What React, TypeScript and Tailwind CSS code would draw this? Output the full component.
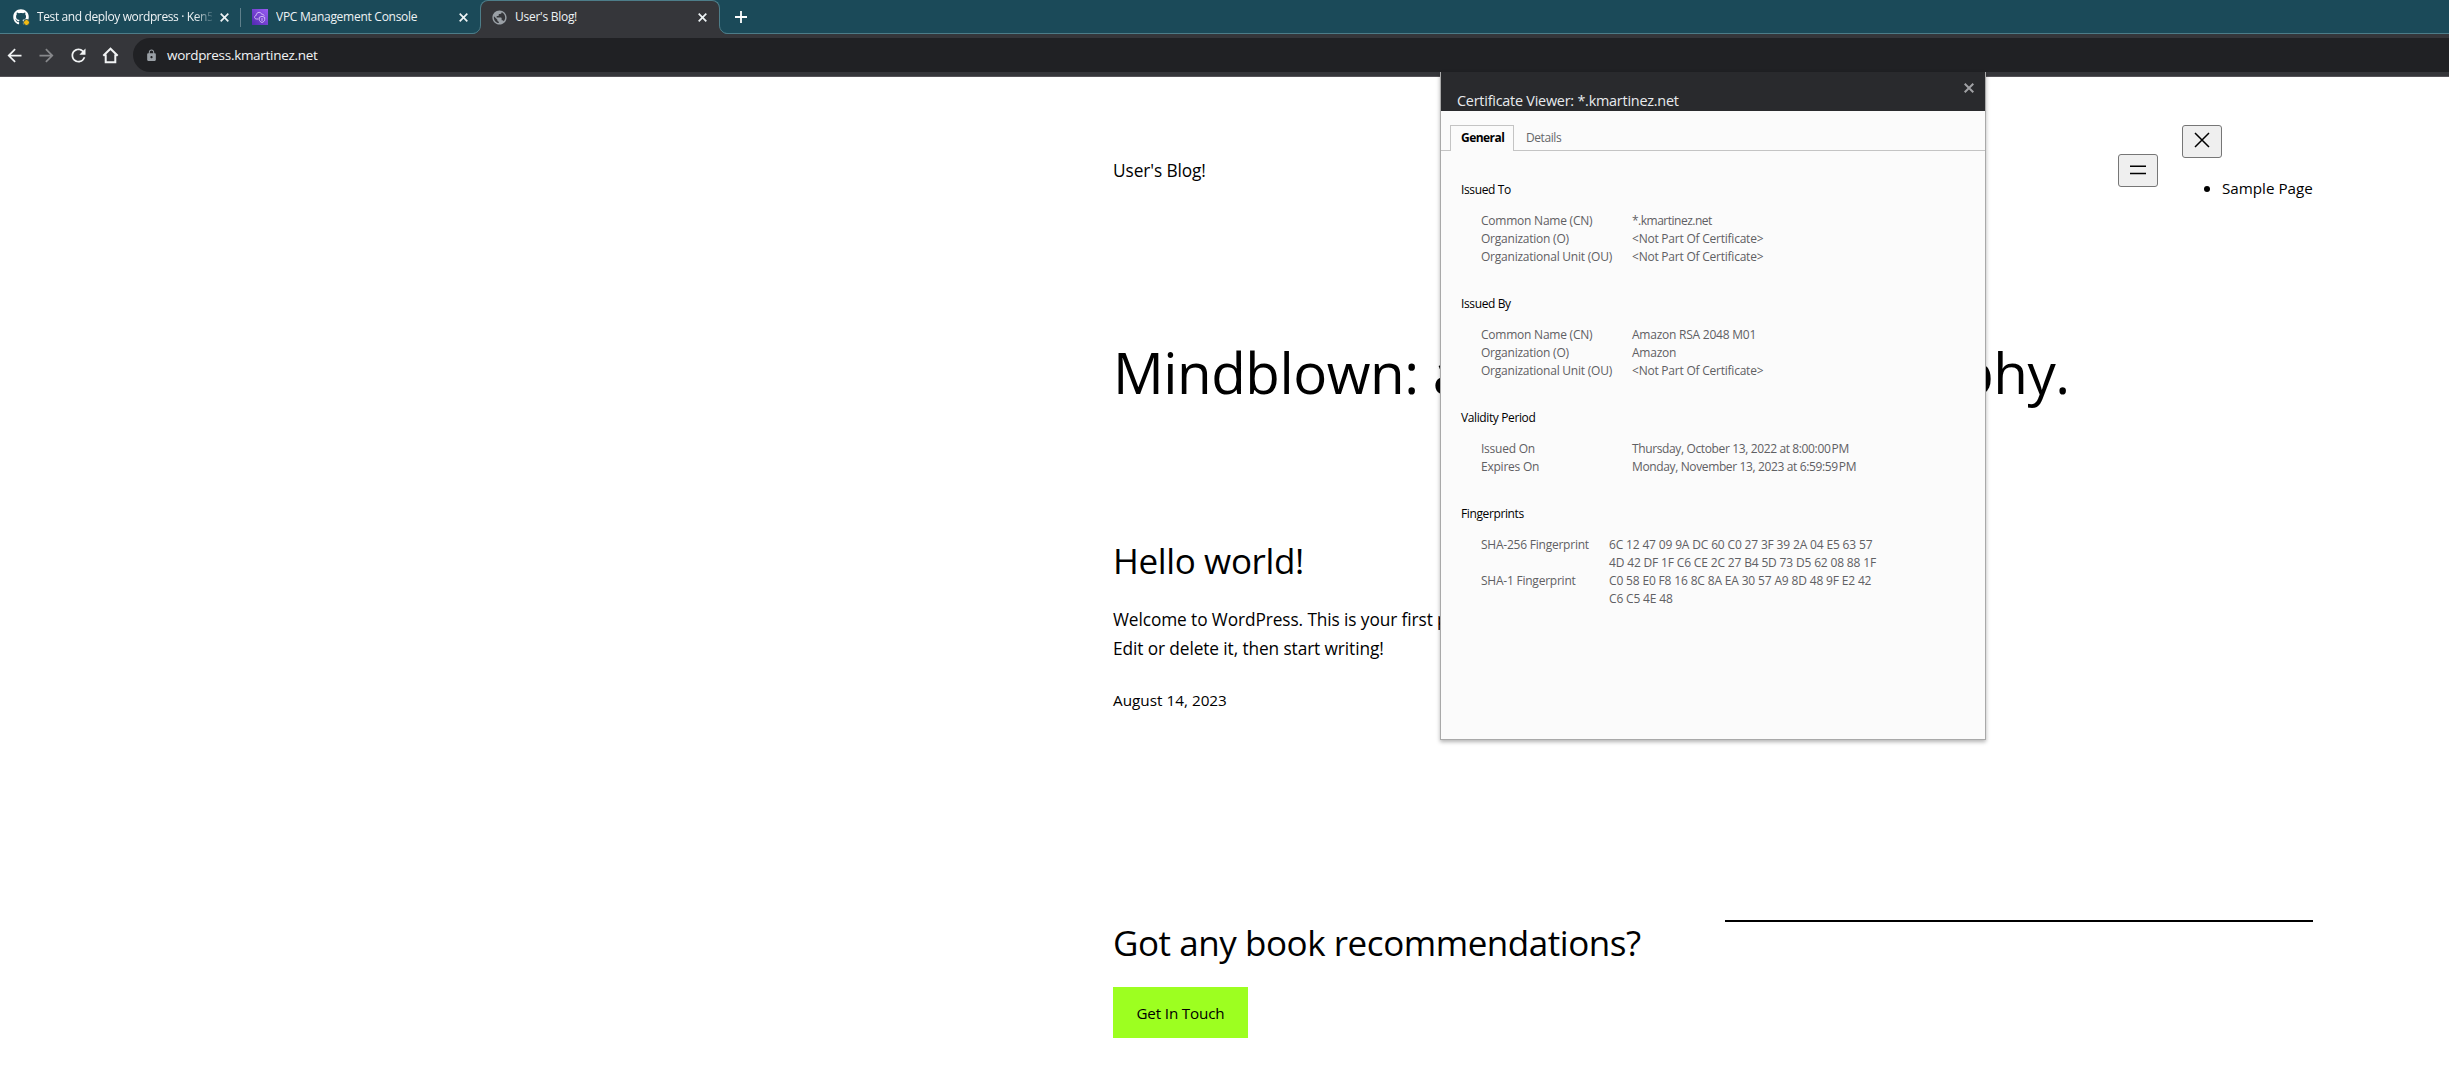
import type { ReactNode } from "react";
import { FaGithub } from "react-icons/fa";
import { MdArrowBack, MdArrowForward, MdLock, MdPublic, MdRefresh } from "react-icons/md";

function Cross({ size, stroke = 1.7 }: { size: number; stroke?: number }) {
  return (
    <svg width={size} height={size} viewBox={`0 0 ${size} ${size}`} className="shrink-0" fill="none" stroke="currentColor" strokeWidth={stroke}>
      <path d={`M.7 .7L${size - 0.7} ${size - 0.7}M${size - 0.7} .7L.7 ${size - 0.7}`} />
    </svg>
  );
}

function VpcIcon() {
  return (
    <svg width="16" height="16" viewBox="0 0 16 16" className="shrink-0">
      <defs>
        <linearGradient id="vpc" x1="0" y1="1" x2="1" y2="0">
          <stop offset="0" stopColor="#5128b0" />
          <stop offset="1" stopColor="#9a5cf5" />
        </linearGradient>
      </defs>
      <rect width="16" height="16" fill="url(#vpc)" />
      <g fill="none" stroke="#e3d6fb" strokeWidth=".8">
        <path d="M6.5 10H4.6C3.3 10 2.6 9.2 2.6 8.200C2.600 7.200 3.300 6.500 4.200 6.400C4.200 4.500 5.500 3.400 7.100 3.400C8.500 3.400 9.400 4.200 9.800 5.400C11 5 12 5.700 12.100 6.800" />
        <path d="M10 7.300L12.700 8.300V10.500C12.700 12 11.500 12.900 10 13.500C8.500 12.900 7.300 12 7.300 10.500V8.300ZM10 9V12" />
      </g>
    </svg>
  );
}

function Tab({ icon, children, fade }: { icon: ReactNode; children: ReactNode; fade?: boolean }) {
  return (
    <div className="flex h-[34px] w-[239px] items-center pl-[12px] pr-[11px]">
      {icon}
      <div
        className={`ml-[8px] flex-1 overflow-hidden whitespace-nowrap text-[12px] leading-[18px] ${
          fade ? "-tracking-[0.38px] [mask-image:linear-gradient(to_right,black_158px,transparent_178px)]" : "-tracking-[0.27px]"
        }`}
      >
        {children}
      </div>
      <span className="ml-[8px] flex w-[9px]"><Cross size={9} /></span>
    </div>
  );
}

function TabStrip() {
  return (
    <div className="flex h-[34px] border-b border-[#4d7d89] bg-[#1b4a59] text-[#eef3f5]">
      <div className="ml-px flex">
        <Tab
          fade
          icon={
            <span className="relative flex">
              <FaGithub size={16} color="#fff" />
              <span className="absolute -bottom-px -right-px size-[5px] rounded-full border border-[#1b4a59] bg-[#f2bb13] box-content" />
            </span>
          }
        >
          Test and deploy wordpress · Ken5
        </Tab>
      </div>
      <div className="mt-[8px] h-[19px] w-px bg-[#5f808b]" />
      <div className="-ml-px"><Tab icon={<VpcIcon />}>VPC Management Console</Tab></div>
      <div className="relative ml-px h-[34px] w-[240px] rounded-t-[8px] border-x border-t border-[#4d7d89] bg-[#35363a]">
        <div className="-ml-[2px] -mt-px"><Tab icon={<MdPublic size={17} color="#9aa0a6" className="-mr-px" />}>User's Blog!</Tab></div>
        <svg width="9" height="9" viewBox="0 0 9 9" className="absolute -bottom-0 -left-[9px]">
          <path d="M9 0V9H0C5 9 8.500 5 8.500 0Z" fill="#35363a" />
          <path d="M0 8.500C5 8.500 8.500 5 8.500 0" fill="none" stroke="#4d7d89" />
        </svg>
        <svg width="9" height="9" viewBox="0 0 9 9" className="absolute -bottom-0 -right-[9px]">
          <path d="M0 0V9H9C4 9 .5 5 .5 0Z" fill="#35363a" />
          <path d="M9 8.500C4 8.500 .5 5 .5 0" fill="none" stroke="#4d7d89" />
        </svg>
      </div>
      <svg width="12" height="12" viewBox="0 0 12 12" className="ml-[15px] mt-[11px]" stroke="#fff" strokeWidth="1.800">
        <path d="M6 0V12M0 6H12" />
      </svg>
    </div>
  );
}

function Toolbar() {
  return (
    <div className="flex h-[43px] items-center border-b border-[#555358] bg-[#35363a] text-[#f1f3f4]">
      <div className="flex w-[133px] gap-[11px] pl-[4px]">
        <MdArrowBack size={21} />
        <MdArrowForward size={21} color="#87888b" />
        <MdRefresh size={21} />
        <svg width="21" height="21" viewBox="0 0 21 21" fill="none" stroke="currentColor" strokeWidth="2">
          <path d="M3.300 10.700L10.500 3.700L17.700 10.700M5.700 9.500V17.300H15.300V9.500" />
        </svg>
      </div>
      <div className="flex h-[34px] flex-1 items-center rounded-l-full bg-[#202124] pl-[12px]">
        <MdLock size={13} color="#9aa0a6" />
        <span className="ml-[9px] text-[13.5px] leading-[18px] -tracking-[0.3px]">wordpress.kmartinez.net</span>
      </div>
    </div>
  );
}

const narrow = "-tracking-[0.5px]";
const date = "-tracking-[0.37px]";
const hex = "-tracking-[0.16px]";
const none = "<Not Part Of Certificate>";

type Row = { label: string; value: ReactNode; style?: string };

function Section({ title, rows, wide }: { title: string; rows: Row[]; wide?: boolean }) {
  return (
    <section className="mb-[29px]">
      <h3 className="mb-[13px] -tracking-[0.38px] text-black">{title}</h3>
      {rows.map((r) => (
        <div key={r.label} className="flex pl-[20px] text-[#5f6063]">
          <div className={wide ? "w-[128px]" : "w-[151px]"}>{r.label}</div>
          <div className={r.style}>{r.value}</div>
        </div>
      ))}
    </section>
  );
}

function CertificateDialog() {
  return (
    <div className="absolute left-[1440px] top-[72px] flex h-[668px] w-[546px] flex-col border-x border-b border-[#a9a9a9] bg-[#fbfbfb] text-[12px] leading-[18px] -tracking-[0.23px] shadow-[0_2px_4px_rgba(0,0,0,0.3)]">
      <header className="flex h-[39px] shrink-0 justify-between bg-[#292a2d] pl-[16px] pr-[11px]">
        <h2 className="pt-[19px] text-[14.4px] leading-[20px] text-[#e8eaed]">Certificate Viewer: *.kmartinez.net</h2>
        <span className="mt-[11px] text-[#a0a1a4]"><Cross size={10} stroke={2} /></span>
      </header>
      <div className="mt-[14px] flex h-[26px] shrink-0">
        <div className="w-[9px] border-b border-[#c4c4c4]" />
        <div className="w-[64px] border-x border-t border-[#c4c4c4] pl-[10px] pt-[3px] font-bold -tracking-[0.55px] text-black">General</div>
        <div className="flex-1 border-b border-[#c4c4c4] pl-[12px] pt-[4px] -tracking-[0.42px] text-[#66676a]">Details</div>
      </div>
      <div className="px-[20px] pt-[30px]">
        <Section
          title="Issued To"
          rows={[
            { label: "Common Name (CN)", value: "*.kmartinez.net", style: narrow },
            { label: "Organization (O)", value: none },
            { label: "Organizational Unit (OU)", value: none },
          ]}
        />
        <Section
          title="Issued By"
          rows={[
            { label: "Common Name (CN)", value: "Amazon RSA 2048 M01" },
            { label: "Organization (O)", value: "Amazon" },
            { label: "Organizational Unit (OU)", value: none },
          ]}
        />
        <Section
          title="Validity Period"
          rows={[
            { label: "Issued On", value: "Thursday, October 13, 2022 at 8:00:00\u202fPM", style: date },
            { label: "Expires On", value: "Monday, November 13, 2023 at 6:59:59\u202fPM", style: date },
          ]}
        />
        <Section
          wide
          title="Fingerprints"
          rows={[
            { label: "SHA-256 Fingerprint", value: <>6C 12 47 09 9A DC 60 C0 27 3F 39 2A 04 E5 63 57<br />4D 42 DF 1F C6 CE 2C 27 B4 5D 73 D5 62 08 88 1F</>, style: hex },
            { label: "SHA-1 Fingerprint", value: <>C0 58 E0 F8 16 8C 8A EA 30 57 A9 8D 48 9F E2 42<br />C6 C5 4E 48</>, style: hex },
          ]}
        />
      </div>
    </div>
  );
}

const pageButton = "flex h-[33px] w-[40px] justify-center rounded-[3px] border border-[#767676] bg-[#efefef]";

function BlogPage() {
  return (
    <main className="ml-[1113px] w-[1200px] pt-[48px] text-black">
      <header className="flex h-[90px] items-center">
        <div className="flex-1 pt-[2px] text-[17.3px] leading-[28px] -tracking-[0.1px]">User's Blog!</div>
        <button className={`${pageButton} mr-[24px]`}>
          <svg width="16" height="10" viewBox="0 0 16 10" className="mt-[10px]" fill="none" stroke="#000" strokeWidth="1.500">
            <path d="M0 1.200H16M0 8.600H16" />
          </svg>
        </button>
        <nav className="h-full w-[131px]">
          <button className={pageButton}>
            <svg width="16" height="16" viewBox="0 0 16 16" className="mt-[6px]" fill="none" stroke="#000" strokeWidth="1.500">
              <path d="M1 1L15 15M15 1L1 15" />
            </svg>
          </button>
          <ul className="mt-[16px] pl-[22px]">
            <li className="flex items-center whitespace-nowrap text-[15.2px] leading-[28px]">
              <span className="mt-[2px] mr-[12px] size-[6px] rounded-full bg-black" />
              Sample Page
            </li>
          </ul>
        </nav>
      </header>
      <h1 className="mt-[124px] whitespace-nowrap text-[56.5px] leading-[68px] -tracking-[0.49px]">Mindblown: a blog about philosophy.</h1>
      <article className="mt-[133px]">
        <h2 className="text-[35px] leading-[42px] -tracking-[0.36px]">Hello world!</h2>
        <p className="mt-[23px] text-[17.3px] leading-[29px] -tracking-[0.1px]">
          Welcome to WordPress. This is your first post.
          <br />
          Edit or delete it, then start writing!
        </p>
        <p className="mt-[25px] text-[15.3px] leading-[24px]">August 14, 2023</p>
      </article>
      <footer className="mt-[208px] flex h-[164px] justify-between">
        <div>
          <h2 className="mt-[2px] text-[35px] leading-[42px] -tracking-[0.45px]">Got any book recommendations?</h2>
          <button className="mt-[23px] flex h-[51px] w-[135px] items-center justify-center bg-[#9dff20] pt-[2px] text-[15.2px] -tracking-[0.15px]">Get In Touch</button>
        </div>
        <div className="h-[2px] w-[588px] bg-black" />
      </footer>
    </main>
  );
}

export default function App() {
  return (
    <div className="relative h-[1084px] w-full overflow-hidden bg-white font-['Open_Sans','Noto_Sans',sans-serif]">
      <TabStrip />
      <Toolbar />
      <BlogPage />
      <CertificateDialog />
    </div>
  );
}
